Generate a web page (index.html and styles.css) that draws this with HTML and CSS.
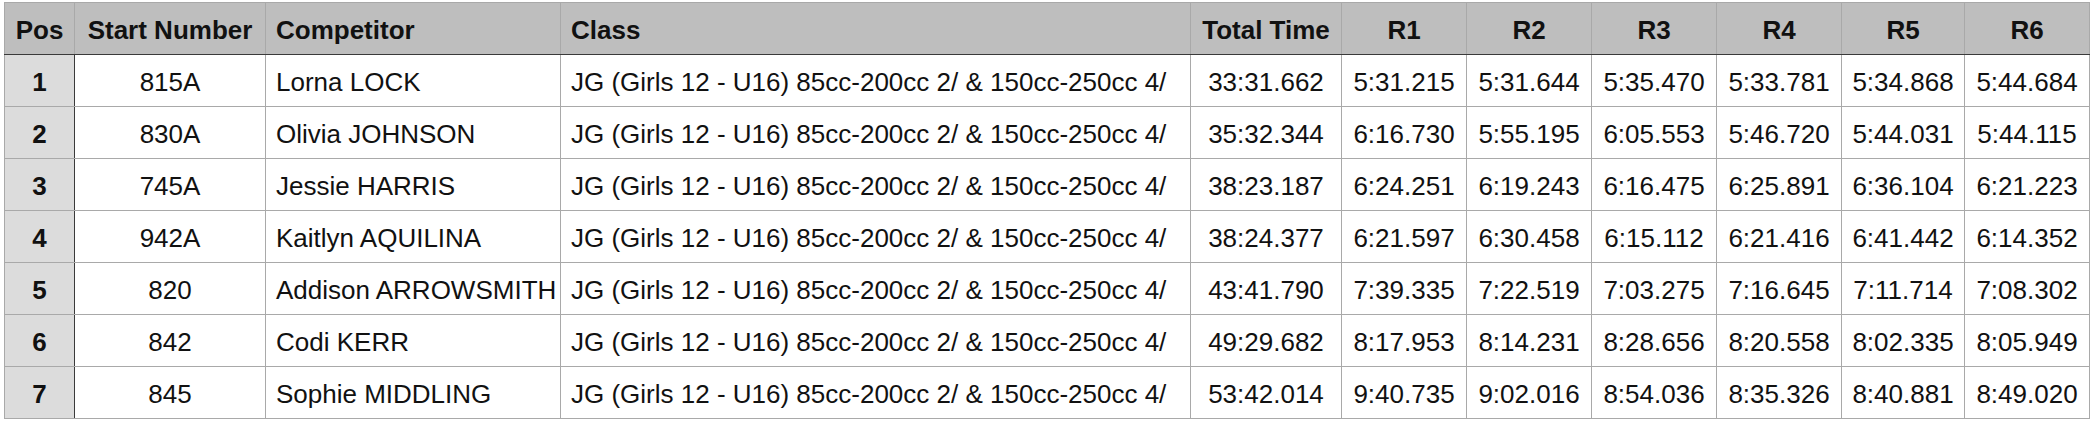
FILE: index.html
```html
<!DOCTYPE html>
<html lang="en">
<head>
<meta charset="utf-8">
<title>Results</title>
<link rel="stylesheet" href="styles.css">
</head>
<body>
<table class="results">
  <colgroup>
    <col class="c-pos">
    <col class="c-start">
    <col class="c-comp">
    <col class="c-class">
    <col class="c-total">
    <col class="c-r">
    <col class="c-r">
    <col class="c-r">
    <col class="c-r">
    <col class="c-r5">
    <col class="c-r">
  </colgroup>
  <thead>
    <tr>
      <th class="pos">Pos</th>
      <th>Start Number</th>
      <th class="left">Competitor</th>
      <th class="left">Class</th>
      <th>Total Time</th>
      <th>R1</th>
      <th>R2</th>
      <th>R3</th>
      <th>R4</th>
      <th>R5</th>
      <th>R6</th>
    </tr>
  </thead>
  <tbody>
    <tr><td class="pos">1</td><td>815A</td><td class="left">Lorna LOCK</td><td class="left">JG (Girls 12 - U16) 85cc-200cc 2/ &amp; 150cc-250cc 4/</td><td>33:31.662</td><td>5:31.215</td><td>5:31.644</td><td>5:35.470</td><td>5:33.781</td><td>5:34.868</td><td>5:44.684</td></tr>
    <tr><td class="pos">2</td><td>830A</td><td class="left">Olivia JOHNSON</td><td class="left">JG (Girls 12 - U16) 85cc-200cc 2/ &amp; 150cc-250cc 4/</td><td>35:32.344</td><td>6:16.730</td><td>5:55.195</td><td>6:05.553</td><td>5:46.720</td><td>5:44.031</td><td>5:44.115</td></tr>
    <tr><td class="pos">3</td><td>745A</td><td class="left">Jessie HARRIS</td><td class="left">JG (Girls 12 - U16) 85cc-200cc 2/ &amp; 150cc-250cc 4/</td><td>38:23.187</td><td>6:24.251</td><td>6:19.243</td><td>6:16.475</td><td>6:25.891</td><td>6:36.104</td><td>6:21.223</td></tr>
    <tr><td class="pos">4</td><td>942A</td><td class="left">Kaitlyn AQUILINA</td><td class="left">JG (Girls 12 - U16) 85cc-200cc 2/ &amp; 150cc-250cc 4/</td><td>38:24.377</td><td>6:21.597</td><td>6:30.458</td><td>6:15.112</td><td>6:21.416</td><td>6:41.442</td><td>6:14.352</td></tr>
    <tr><td class="pos">5</td><td>820</td><td class="left">Addison ARROWSMITH</td><td class="left">JG (Girls 12 - U16) 85cc-200cc 2/ &amp; 150cc-250cc 4/</td><td>43:41.790</td><td>7:39.335</td><td>7:22.519</td><td>7:03.275</td><td>7:16.645</td><td>7:11.714</td><td>7:08.302</td></tr>
    <tr><td class="pos">6</td><td>842</td><td class="left">Codi KERR</td><td class="left">JG (Girls 12 - U16) 85cc-200cc 2/ &amp; 150cc-250cc 4/</td><td>49:29.682</td><td>8:17.953</td><td>8:14.231</td><td>8:28.656</td><td>8:20.558</td><td>8:02.335</td><td>8:05.949</td></tr>
    <tr><td class="pos">7</td><td>845</td><td class="left">Sophie MIDDLING</td><td class="left">JG (Girls 12 - U16) 85cc-200cc 2/ &amp; 150cc-250cc 4/</td><td>53:42.014</td><td>9:40.735</td><td>9:02.016</td><td>8:54.036</td><td>8:35.326</td><td>8:40.881</td><td>8:49.020</td></tr>
  </tbody>
</table>
</body>
</html>
```
FILE: styles.css
```css
html, body {
  margin: 0;
  padding: 0;
  background: #ffffff;
}

body {
  padding: 2px 0 0 4px;
  font-family: "Liberation Sans", Arial, Helvetica, sans-serif;
  color: #111111;
}

.results {
  border-collapse: collapse;
  table-layout: fixed;
  width: 2086px;
  font-size: 26px;
}

.c-pos { width: 70px; }
.c-start { width: 191px; }
.c-comp { width: 295px; }
.c-class { width: 630px; }
.c-total { width: 151px; }
.c-r { width: 125px; }
.c-r5 { width: 123px; }

.results th,
.results td {
  border: 1px solid #a9a9a9;
  height: 52px;
  box-sizing: border-box;
  padding: 3px 10px 0;
  text-align: center;
  white-space: nowrap;
  overflow: hidden;
  line-height: 1;
}

.results th {
  background: #bebebe;
  font-weight: bold;
  border-bottom: 1px solid #3a3a3a;
}

.results .left {
  text-align: left;
}

.results td.pos {
  background: #dcdcdc;
  font-weight: bold;
  border-right: 1px solid #3a3a3a;
  padding: 3px 0 0;
}

.results th.pos {
  padding: 3px 0 0;
}
```
